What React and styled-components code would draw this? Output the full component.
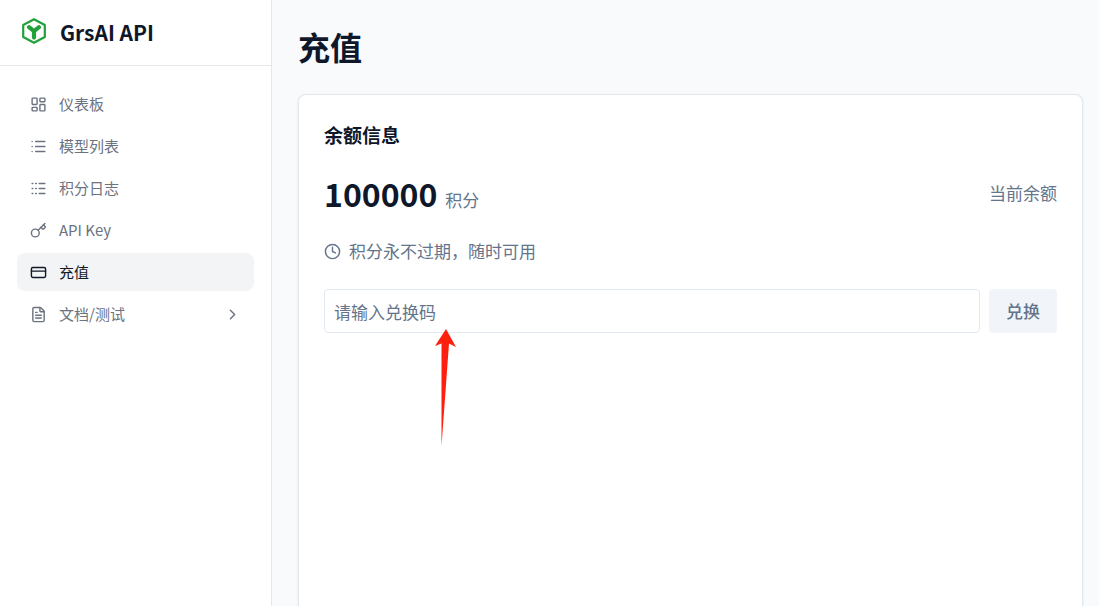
import React from 'react';
import styled, { createGlobalStyle } from 'styled-components';
import {
    ChevronRight,
    Clock,
    CreditCard,
    FileText,
    Key,
    LayoutDashboard,
    List,
    Logs,
} from 'lucide-react';

const GlobalStyle = createGlobalStyle`
    * {
        box-sizing: border-box;
    }

    body {
        margin: 0;
        background: #f8fafc;
        color: #0f172a;
        font-family: "Noto Sans CJK SC", "Noto Sans", sans-serif;
        font-size: 17px;
        line-height: 24px;
    }

    button, input {
        font: inherit;
    }
`;

const Layout = styled.div`
    display: flex;
    height: 100vh;
    overflow: hidden;
`;

const Sidebar = styled.aside`
    flex: 0 0 272px;
    background: #fff;
    border-right: 1px solid #e5e7eb;
`;

const Brand = styled.a`
    display: flex;
    align-items: center;
    gap: 12px;
    padding: 16px 20px 17px;
    border-bottom: 1px solid #e5e7eb;
    color: #0f172a;
    font-size: 21px;
    font-weight: 600;
    line-height: 32px;
    text-decoration: none;

    svg {
        margin-bottom: 2px;
    }
`;

const NavList = styled.ul`
    display: flex;
    flex-direction: column;
    gap: 4px;
    margin: 0;
    padding: 19px 17px;
    list-style: none;
`;

const NavLink = styled.a`
    display: flex;
    align-items: center;
    gap: 12px;
    padding: 8px 13px;
    border-radius: 8px;
    background: ${({ $active }) => $active ? '#f3f4f6' : 'transparent'};
    color: ${({ $active }) => $active ? '#111827' : '#6b7280'};
    font-size: 15px;
    line-height: 22px;
    text-decoration: none;

    .chevron {
        margin-left: auto;
    }
`;

const Main = styled.main`
    flex: 1;
    min-width: 0;
    display: flex;
    flex-direction: column;
    gap: 28px;
    padding: 26px 16px 0 26px;
`;

const PageTitle = styled.h1`
    margin: 0;
    font-size: 32px;
    font-weight: 700;
    line-height: 40px;
`;

const Card = styled.section`
    flex: 1;
    padding: 25px;
    background: #fff;
    border: 1px solid #e2e8f0;
    border-bottom: 0;
    border-radius: 8px 8px 0 0;
    box-shadow: 0 1px 3px rgba(15, 23, 42, 0.08);
`;

const CardTitle = styled.h2`
    margin: 0 0 23px;
    font-size: 19px;
    font-weight: 600;
    line-height: 30px;
`;

const BalanceRow = styled.div`
    display: flex;
    align-items: center;
    justify-content: space-between;
    color: #64748b;
`;

const Balance = styled.div`
    display: flex;
    align-items: baseline;
    gap: 8px;

    strong {
        color: #0f172a;
        font-size: 32px;
        font-weight: 700;
        line-height: 40px;
    }
`;

const Hint = styled.p`
    display: flex;
    align-items: center;
    gap: 8px;
    margin: 26px 0;
    color: #64748b;
`;

const RedeemForm = styled.form`
    display: flex;
    gap: 9px;
`;

const CodeField = styled.div`
    position: relative;
    flex: 1;
`;

const CodeInput = styled.input`
    display: block;
    width: 100%;
    height: 44px;
    padding: 0 9px;
    background: #fff;
    border: 1px solid #e2e8f0;
    border-radius: 4px;
    color: #0f172a;

    &::placeholder {
        color: #64748b;
        opacity: 1;
    }
`;

const Pointer = styled.svg`
    position: absolute;
    top: 40px;
    left: 111px;
    pointer-events: none;
`;

const RedeemButton = styled.button`
    height: 44px;
    padding: 0 17px;
    background: #f1f5f9;
    border: 0;
    border-radius: 4px;
    color: #64748b;
    font-weight: 500;
`;

const navItems = [
    { label: '仪表板', icon: LayoutDashboard, href: '/dashboard' },
    { label: '模型列表', icon: List, href: '/models' },
    { label: '积分日志', icon: Logs, href: '/logs' },
    { label: 'API Key', icon: Key, href: '/keys' },
    { label: '充值', icon: CreditCard, href: '/recharge', active: true },
    { label: '文档/测试', icon: FileText, href: '/docs', more: true },
];

function Logo() {
    return (
        <svg width="28" height="28" viewBox="0 0 28 28" fill="none" aria-hidden="true">
            <path d="M14 2.2 24.8 8v12L14 25.8 3.200 20V8Z" stroke="#22a03a" strokeWidth="2.200" strokeLinejoin="round" />
            <path d="M9 10.200 14 14.200l5-4M14 14.200v6.400" stroke="#22a03a" strokeWidth="4.200" strokeLinecap="round" strokeLinejoin="round" />
        </svg>
    );
}

function App() {
    return (
        <Layout>
            <GlobalStyle />
            <Sidebar>
                <Brand href="/">
                    <Logo />
                    GrsAI API
                </Brand>
                <nav>
                    <NavList>
                        {navItems.map(({ label, icon: Icon, href, active, more }) => (
                            <li key={href}>
                                <NavLink href={href} $active={active} aria-current={active ? 'page' : undefined}>
                                    <Icon size={17} />
                                    {label}
                                    {more && <ChevronRight className="chevron" size={17} />}
                                </NavLink>
                            </li>
                        ))}
                    </NavList>
                </nav>
            </Sidebar>
            <Main>
                <PageTitle>充值</PageTitle>
                <Card>
                    <CardTitle>余额信息</CardTitle>
                    <BalanceRow>
                        <Balance><strong>100000</strong> 积分</Balance>
                        <span>当前余额</span>
                    </BalanceRow>
                    <Hint>
                        <Clock size={17} />
                        积分永不过期，随时可用
                    </Hint>
                    <RedeemForm>
                        <CodeField>
                            <CodeInput type="text" placeholder="请输入兑换码" aria-label="兑换码" />
                            <Pointer width="22" height="118" viewBox="0 0 22 118" aria-hidden="true">
                                <path d="M11 0 21 18 14 14.500 6.500 117 6.500 14.500 0 17Z" fill="#ff1f0f" />
                            </Pointer>
                        </CodeField>
                        <RedeemButton type="button">兑换</RedeemButton>
                    </RedeemForm>
                </Card>
            </Main>
        </Layout>
    );
}

export default App;
